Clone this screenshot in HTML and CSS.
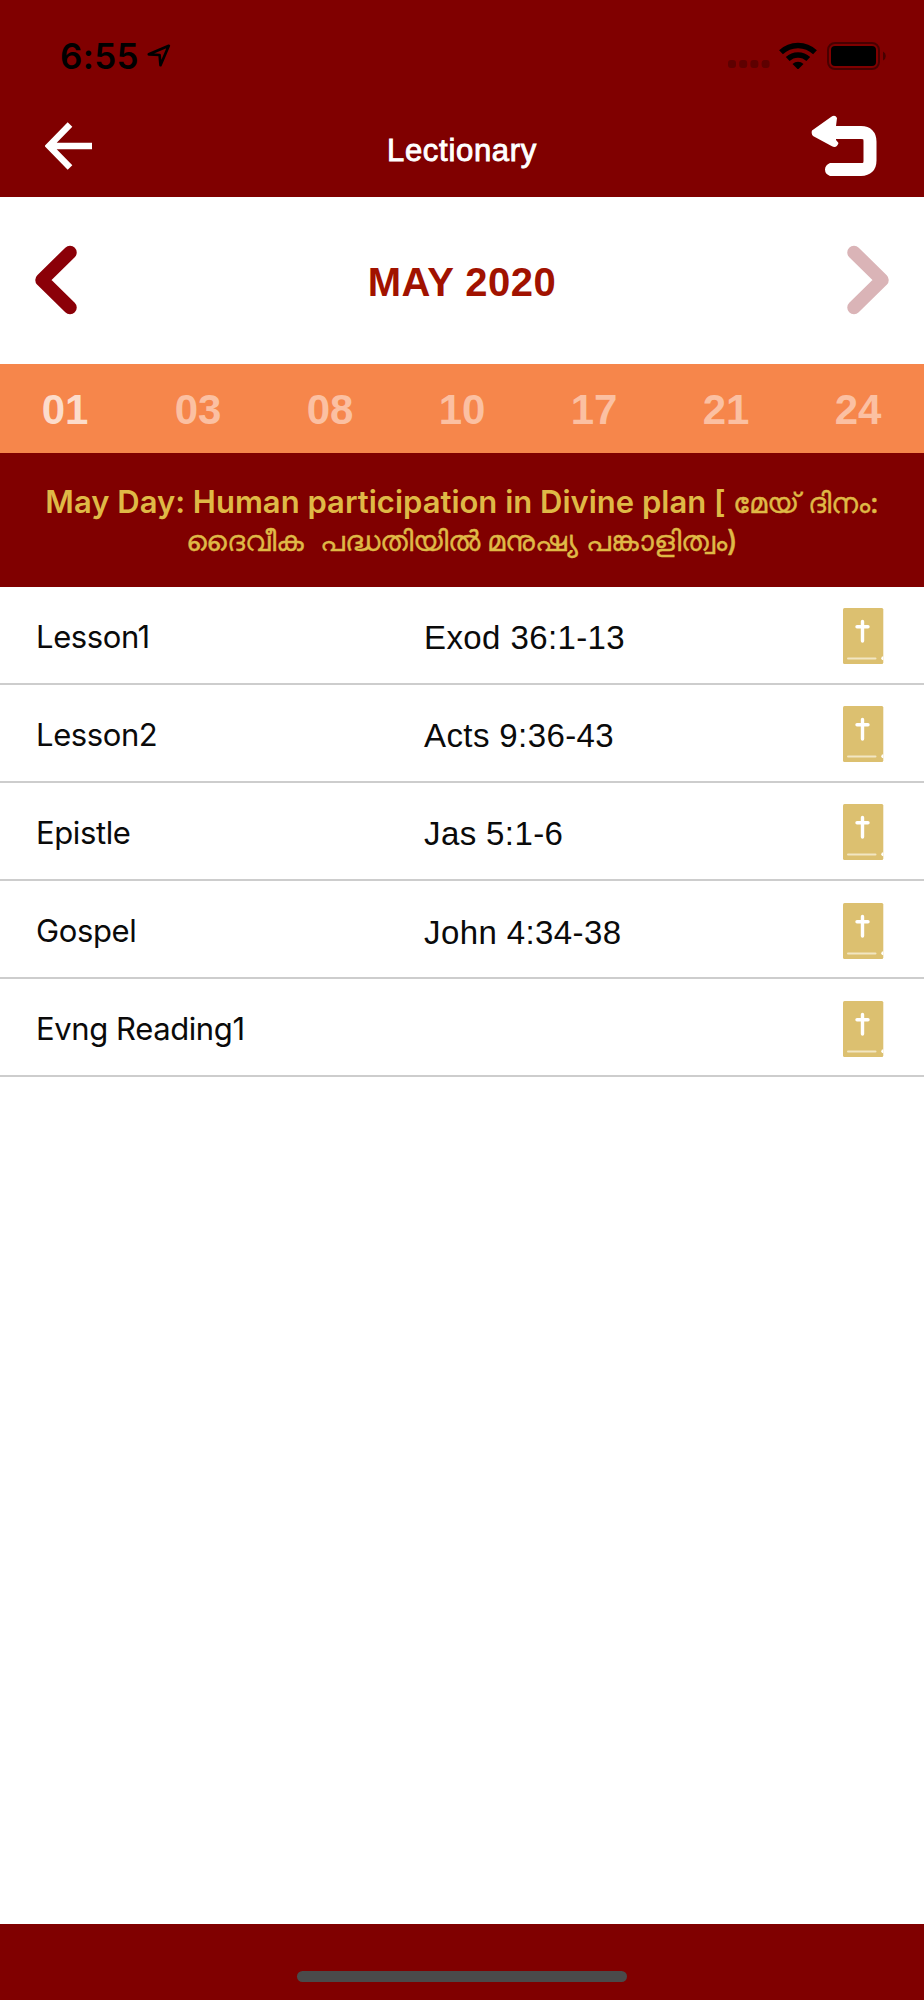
FILE: index.html
```html
<!DOCTYPE html>
<html lang="en">
<head>
    <meta charset="UTF-8">
    <meta name="viewport" content="width=device-width, initial-scale=1.0">
    <title>Lectionary</title>
    <link rel="stylesheet" href="styles.css">
</head>
<body>
    <svg class="defs" width="0" height="0">
        <symbol id="bible" viewBox="0 0 41 56">
            <rect width="40.3" height="56" rx="1.5" fill="#dcc070"/>
            <path d="M19.500 13.500v19.500M14 18.800h11" stroke="#fff" stroke-width="3.400" stroke-linecap="round"/>
            <path d="M5 50.500h27.500" stroke="#f2e6c2" stroke-width="2" stroke-linecap="round"/>
            <path d="M40.300 48.300a2 2 0 0 0 0 4z" fill="#fff"/>
        </symbol>
    </svg>

    <header>
        <div class="status">
            <span class="time">6:55</span>
            <svg class="location" width="24" height="24" viewBox="0 0 24 24"><path d="M1.800 10.300 21.800 1.800 13.500 21.200 12.600 11z" fill="none" stroke="#000" stroke-width="2.700" stroke-linejoin="round"/></svg>
            <svg class="signal" width="42" height="8" viewBox="0 0 42 8" fill="#5e0000"><rect width="8" height="8" rx="3"/><rect x="11.200" width="8" height="8" rx="3"/><rect x="22.400" width="8" height="8" rx="3"/><rect x="33.600" width="8" height="8" rx="3"/></svg>
            <svg class="wifi" width="38" height="27" viewBox="0 0 38 27">
                <g fill="none" stroke="#000" stroke-width="5.500">
                    <path d="M2 10.300a24.500 24.500 0 0 1 34 0"/>
                    <path d="M8.700 17a15 15 0 0 1 20.600 0"/>
                </g>
                <path d="M13.500 22a8 8 0 0 1 11 0L19 27.500z"/>
            </svg>
            <svg class="battery" width="60" height="28" viewBox="0 0 60 28">
                <rect x="1" y="1" width="51" height="26" rx="7" fill="none" stroke="#480000" stroke-width="2"/>
                <rect x="4" y="4" width="45" height="20" rx="4"/>
                <path d="M56 9.500a5 5 0 0 1 0 9z" fill="#480000"/>
            </svg>
        </div>
        <div class="navbar">
            <svg class="back" width="48" height="48" viewBox="0 0 48 48"><path d="M25 2.500 4 24l21 21.500M5 24h42" fill="none" stroke="#fff" stroke-width="6.500"/></svg>
            <h1>Lectionary</h1>
            <svg class="undo" width="66" height="62" viewBox="0 0 66 62">
                <path d="M20 17.500h30q9 0 9 9v19q0 9-9 9H21" fill="none" stroke="#fff" stroke-width="13"/>
                <path d="M1 15.500 20 2q4-3 6 1l-1 8v14l2.500 3q-2 6-7 3L2 21q-2-2-1-5.500zM22 48h-3q-5 2-5 6.500t5 6.500h3z" fill="#fff"/>
            </svg>
        </div>
    </header>

    <section class="month">
        <svg width="42" height="70" viewBox="0 0 42 70"><path d="M35 7.500 7 35l28 27.500" fill="none" stroke="#8b0008" stroke-width="13.500" stroke-linecap="round" stroke-linejoin="round"/></svg>
        <h2>MAY 2020</h2>
        <svg width="42" height="70" viewBox="0 0 42 70"><path d="M7 7.500 35 35 7 62.500" fill="none" stroke="#dab4b7" stroke-width="13.500" stroke-linecap="round" stroke-linejoin="round"/></svg>
    </section>

    <nav class="days">
        <span class="active">01</span>
        <span>03</span>
        <span>08</span>
        <span>10</span>
        <span>17</span>
        <span>21</span>
        <span>24</span>
    </nav>

    <div class="banner">
        <p>May Day: Human participation in Divine plan [ <span class="ml" lang="ml">മേയ് ദിനം:</span></p>
        <p><span class="ml" lang="ml">ദൈവീക  പദ്ധതിയിൽ മനുഷ്യ പങ്കാളിത്വം)</span></p>
    </div>

    <main>
        <div class="row"><span class="label">Lesson1</span><span class="verse">Exod 36:1-13</span><svg class="book"><use href="#bible"/></svg></div>
        <div class="row"><span class="label">Lesson2</span><span class="verse">Acts 9:36-43</span><svg class="book"><use href="#bible"/></svg></div>
        <div class="row"><span class="label">Epistle</span><span class="verse">Jas 5:1-6</span><svg class="book"><use href="#bible"/></svg></div>
        <div class="row"><span class="label">Gospel</span><span class="verse">John 4:34-38</span><svg class="book"><use href="#bible"/></svg></div>
        <div class="row"><span class="label">Evng Reading1</span><span class="verse"></span><svg class="book"><use href="#bible"/></svg></div>
    </main>

    <footer>
        <div class="home-bar"></div>
    </footer>
</body>
</html>
```
FILE: styles.css
```css
* {
    box-sizing: border-box;
}
body {
    margin: 0;
    height: 2000px;
    display: flex;
    flex-direction: column;
    background-color: #fff;
    color: #0a0a0a;
    font-family: "Liberation Sans", Arial, sans-serif;
}
h1, h2, p {
    margin: 0;
}
.defs {
    display: none;
}
header {
    height: 197px;
    background-color: #800000;
}
.status {
    height: 100px;
    padding: 42px 37px 0 60px;
    display: flex;
    align-items: flex-start;
}
.time {
    width: 87px;
    font-family: Inter, sans-serif;
    font-size: 35px;
    font-weight: 600;
    line-height: 28px;
    letter-spacing: 0.3px;
    color: #000;
    white-space: nowrap;
}
.location {
    margin-top: 2px;
}
.signal {
    margin: 18px 9px 0 auto;
}
.battery {
    margin-left: 10px;
}
.navbar {
    display: grid;
    grid-template-columns: 80px 1fr 80px;
    align-items: start;
    padding: 15px 47px 0 45px;
}
.back {
    margin-top: 7px;
}
.undo {
    justify-self: end;
}
h1 {
    padding: 18px 0 0 2px;
    text-align: center;
    font-size: 31px;
    font-weight: 400;
    line-height: 36px;
    letter-spacing: 0.7px;
    color: #fff;
    -webkit-text-stroke: 0.9px #fff;
}
.month {
    height: 167px;
    padding: 0 35px 1px;
    display: flex;
    align-items: center;
    justify-content: space-between;
}
h2 {
    padding-top: 4px;
    font-size: 40px;
    letter-spacing: 0.5px;
    color: #a11200;
}
.days {
    height: 89px;
    padding-top: 3px;
    display: grid;
    grid-template-columns: repeat(7, 1fr);
    align-items: center;
    text-align: center;
    background-color: #f6864b;
    color: #fbc0a2;
    font-size: 42px;
    font-weight: bold;
}
.days .active {
    padding-right: 2px;
    color: #fcdccb;
}
.banner {
    height: 134px;
    padding-top: 30px;
    background-color: #800000;
    color: #dfb946;
    font-family: Inter, sans-serif;
    font-size: 31px;
    font-weight: 600;
    line-height: 38px;
    text-align: center;
}
.banner p {
    height: 38px;
    white-space: pre;
}
.ml {
    font-size: 28.6px;
    font-weight: 500;
    -webkit-text-stroke: 0.4px #dfb946;
}
.row {
    height: 98.2px;
    padding: 0 40px 0 36px;
    display: grid;
    grid-template-columns: 388px 1fr 41px;
    align-items: center;
    border-bottom: 2px solid #cdcdcd;
}
.row:first-child {
    height: 97.7px;
}
.label {
    padding-top: 3px;
    font-family: Inter, sans-serif;
    font-size: 31px;
    letter-spacing: -0.4px;
}
.verse {
    padding-top: 7px;
    font-size: 33px;
    letter-spacing: 0.4px;
}
.book {
    width: 41px;
    height: 56px;
    margin-top: 3px;
}
footer {
    height: 76px;
    margin-top: auto;
    padding-top: 47px;
    background-color: #800000;
}
.home-bar {
    width: 330px;
    height: 11px;
    margin: 0 auto;
    border-radius: 6px;
    background-color: #4a4a4a;
}
```
